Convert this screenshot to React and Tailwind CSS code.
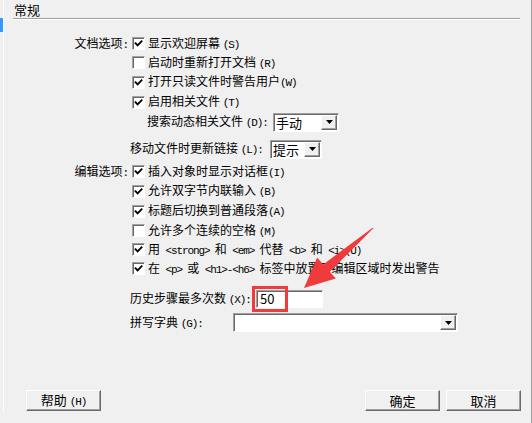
import React from "react";

const font = "font-['Noto_Sans_CJK_SC',sans-serif]";

// SimSun-style: half-width ASCII runs are narrow monospace, spaces stay narrow
function T({ children }) {
  const parts = String(children).split(/([\x21-\x7E]+)/);
  return (
    <span className="whitespace-pre">
      {parts.map((p, i) =>
        /^[\x21-\x7E]+$/.test(p) ? (
          <span key={i} className="font-['Liberation_Mono',monospace] text-[11px] tracking-[-1.1px]">
            {p}
          </span>
        ) : (
          <span key={i}>{p}</span>
        )
      )}
    </span>
  );
}

function Checkbox({ checked }) {
  return (
    <span className="flex h-[13px] w-[13px] shrink-0 items-center justify-center border border-t-[#a0a0a0] border-l-[#a0a0a0] border-r-white border-b-white bg-white shadow-[inset_1px_1px_0_#696969]">
      {checked && (
        <svg viewBox="0 0 9 9" className="h-[9px] w-[9px]" fill="none" stroke="#000" strokeWidth="1.8">
          <path d="M1.5 4.2 3.6 6.4 7.6 2.2" strokeLinecap="square" />
        </svg>
      )}
    </span>
  );
}

function DropButton() {
  return (
    <span className="flex h-[15px] w-[16px] shrink-0 items-center justify-center border border-t-white border-l-white border-r-[#696969] border-b-[#696969] bg-[#f0f0f0] shadow-[inset_-1px_-1px_0_#a0a0a0]">
      <svg viewBox="0 0 7 4" className="h-[4px] w-[7px]">
        <path d="M0 0h7L3.5 4z" fill="#000" />
      </svg>
    </span>
  );
}

function Select({ value, className }) {
  return (
    <div
      className={`flex h-[19px] shrink-0 items-center justify-between border border-t-[#a0a0a0] border-l-[#a0a0a0] border-r-white border-b-white bg-white pl-[2px] pr-[1px] shadow-[inset_1px_1px_0_#696969] ${className}`}
    >
      <span className="text-[13px] leading-[15px]">{value}</span>
      <DropButton />
    </div>
  );
}

function CheckRow({ label, checked, text, h }) {
  return (
    <div className={`flex items-center ${h}`}>
      <div className="w-[126px] shrink-0 pr-[2px] text-right">{label && <T>{label}</T>}</div>
      <div className="ml-[2px] flex items-center gap-[3px]">
        <Checkbox checked={checked} />
        <T>{text}</T>
      </div>
    </div>
  );
}

function Button({ children }) {
  return (
    <button
      type="button"
      className="flex h-[21px] w-[75px] items-center justify-center border border-t-white border-l-white border-r-[#696969] border-b-[#696969] bg-[#f0f0f0] text-[13px] shadow-[inset_-1px_-1px_0_#a0a0a0]"
    >
      <T>{children}</T>
    </button>
  );
}

export default function App() {
  return (
    <div className={`relative flex h-[423px] w-[532px] overflow-hidden bg-[#f0f0f0] text-[12px] leading-[14px] text-black ${font}`}>
      <div className="h-[412px] w-[4px] shrink-0 border-r border-white pt-[18px]">
        <div className="h-[14px] w-[3px] bg-[#3399ff]" />
      </div>

      <div className="flex h-full flex-1 flex-col border-r border-[#a0a0a0]">
        <div className="h-[18px] pl-[10px] pt-[2px] text-[13px] leading-[15px]">常规</div>
        <div className="ml-[9px] h-[2px] w-[507px] border-t border-b border-t-[#a0a0a0] border-b-white" />

        <div className="mt-[14px] flex flex-col">
          <CheckRow h="h-[19px]" label="文档选项:" checked text="显示欢迎屏幕 (S)" />
          <CheckRow h="h-[19px]" text="启动时重新打开文档 (R)" />
          <CheckRow h="h-[20px]" checked text="打开只读文件时警告用户(W)" />
          <CheckRow h="h-[20px]" checked text="启用相关文件 (T)" />

          <div className="flex h-[20px] items-center pl-[143px]">
            <span className="w-[126px] shrink-0"><T>搜索动态相关文件 (D):</T></span>
            <Select value="手动" className="w-[66px]" />
          </div>

          <div className="mt-[7px] flex h-[20px] items-center pl-[126px]">
            <span className="w-[140px] shrink-0"><T>移动文件时更新链接 (L):</T></span>
            <Select value="提示" className="w-[52px]" />
          </div>

          <CheckRow h="mt-[3px] h-[19px]" label="编辑选项:" checked text="插入对象时显示对话框(I)" />
          <CheckRow h="h-[20px]" checked text="允许双字节内联输入 (B)" />
          <CheckRow h="h-[20px]" checked text="标题后切换到普通段落(A)" />
          <CheckRow h="h-[19px]" text="允许多个连续的空格 (M)" />
          <CheckRow h="h-[19px]" checked text="用  <strong>  和  <em>  代替  <b>  和  <i>(U)" />
          <CheckRow h="h-[19px]" checked text="在  <p>  或  <h1>-<h6>  标签中放置可编辑区域时发出警告" />

          <div className="mt-[11px] flex h-[20px] items-center pl-[126px]">
            <span className="w-[126px] shrink-0"><T>历史步骤最多次数 (X):</T></span>
            <div className="flex h-[18px] w-[67px] shrink-0 items-center border border-t-[#a0a0a0] border-l-[#a0a0a0] border-r-white border-b-white bg-white pl-[3px] text-[13px] shadow-[inset_1px_1px_0_#696969]">
              50
            </div>
          </div>

          <div className="mt-[3px] flex h-[21px] items-center pl-[126px]">
            <span className="w-[103px] shrink-0"><T>拼写字典 (G):</T></span>
            <Select value="" className="w-[225px]" />
          </div>
        </div>

        <div className="mt-auto flex items-center pb-[12px] pl-[22px] pr-[10px]">
          <Button>帮助 (H)</Button>
          <div className="ml-auto flex gap-[6px]">
            <Button>确定</Button>
            <Button>取消</Button>
          </div>
        </div>
      </div>

      <div className="pointer-events-none absolute left-[252px] top-[286px] h-[26px] w-[36px] border-[3px] border-[#f03a3c]" />
      <svg className="pointer-events-none absolute left-0 top-0" width="532" height="423" viewBox="0 0 532 423">
        <polygon
          points="373.4,228.3 329.8,271.8 335.8,278.6 304,288 317.2,257.6 323.2,264.4 372.6,227.7"
          fill="#f03a3c"
        />
      </svg>
    </div>
  );
}
